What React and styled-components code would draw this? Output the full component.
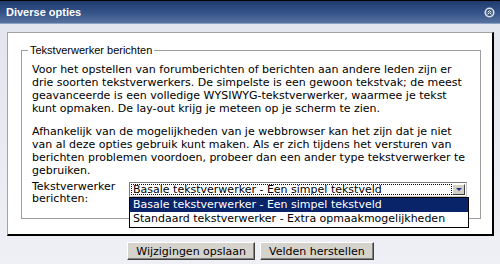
import React from 'react';
import styled, { createGlobalStyle } from 'styled-components';

const GlobalStyle = createGlobalStyle`
  html, body {
    margin: 0;
    padding: 0;
    background: #e4e7ef;
  }
`;

const Window = styled.div`
  width: 500px;
  height: 264px;
  box-sizing: border-box;
  border-top: 1px solid #000;
  background: linear-gradient(#e1e4ed, #eef0f5);
  display: flex;
  flex-direction: column;
  overflow: hidden;
  font-family: "DejaVu Sans", Verdana, sans-serif;
  font-size: 11px;
  color: #000;
`;

const TitleBar = styled.div`
  flex: none;
  height: 22px;
  display: flex;
  align-items: center;
  justify-content: space-between;
  padding: 0 5px 0 6px;
  background: linear-gradient(#1f3b6e, #365489 55%, #56729f);
  border-bottom: 1px solid #8ea2c6;
`;

const Title = styled.h1`
  margin: 0;
  font: bold 11px "Liberation Sans", Arial, sans-serif;
  color: #fff;
`;

const Body = styled.div`
  padding: 8px 6px 0 7px;
`;

const Panel = styled.div`
  background: #fff;
  border-top: 1px solid #a3a3a3;
  border-left: 1px solid #a3a3a3;
  border-right: 2px solid #000;
  border-bottom: 2px solid #000;
  padding: 11px 11px 15px 13px;
`;

const Group = styled.fieldset`
  margin: 0;
  min-inline-size: 0;
  padding: 6px 13px 13px 10px;
  border: 1px solid #9d9d9d;
`;

const Legend = styled.legend`
  margin-left: -4px;
  padding: 0 2px;
  font: 11px/13px "Liberation Sans", Arial, sans-serif;
  color: #000;
`;

const Para = styled.p`
  margin: 0 0 ${p => p.$gap}px;
  line-height: 13px;
  white-space: nowrap;
`;

const Row = styled.div`
  display: flex;
  align-items: flex-start;
`;

const Label = styled.label`
  width: 97px;
  flex: none;
  line-height: 12px;
`;

const Select = styled.div`
  position: relative;
  width: 338px;
  height: 15px;
  margin-top: 1px;
  box-sizing: border-box;
  display: flex;
  padding: 1px;
  background: #fff;
  border: 1px solid #7a7a7a;
  border-right-color: #c9c9c9;
  border-bottom-color: #c9c9c9;
`;

const Value = styled.div`
  flex: 1;
  border: 1px dotted #000;
  padding-left: 1px;
  line-height: 9px;
  white-space: nowrap;
  overflow: hidden;
`;

const ArrowButton = styled.div`
  width: 13px;
  box-sizing: border-box;
  display: flex;
  align-items: center;
  justify-content: center;
  background: #d4d0c8;
  border: 1px solid;
  border-color: #fff #404040 #404040 #fff;

  &::after {
    content: "";
    border-left: 3px solid transparent;
    border-right: 3px solid transparent;
    border-top: 3px solid #1a2c86;
  }
`;

const List = styled.ul`
  position: absolute;
  top: calc(100% + 1px);
  left: -1px;
  width: 340px;
  box-sizing: border-box;
  margin: 0;
  padding: 0 0 1px;
  list-style: none;
  background: #fff;
  border: 1px solid #000;
  z-index: 2;
`;

const Option = styled.li`
  height: 14px;
  line-height: 14px;
  padding-left: 3px;
  white-space: nowrap;
  background: ${p => (p.$active ? '#0a246a' : '#fff')};
  color: ${p => (p.$active ? '#fff' : '#000')};
`;

const Buttons = styled.div`
  display: flex;
  justify-content: center;
  gap: 5px;
  margin-top: 6px;
`;

const Button = styled.button`
  height: 18px;
  padding: 0 8px;
  font: 11px/13px "DejaVu Sans", Verdana, sans-serif;
  color: #000;
  background: #d6d3cc;
  border: 1px solid;
  border-color: #fff #404040 #404040 #fff;
  box-shadow: inset -1px -1px 0 #808080;
`;

function CollapseIcon() {
  return (
    <svg width="11" height="11" viewBox="0 0 11 11">
      <circle cx="5.5" cy="5.5" r="5" fill="#dde2ea" />
      <circle cx="5.5" cy="5.5" r="3.4" fill="#3d5683" />
      <path d="M3.6 5.4 L5.5 3.6 L7.4 5.4 M3.6 7.4 L5.5 5.6 L7.4 7.4" stroke="#fff" strokeWidth="1" fill="none" />
    </svg>
  );
}

export default function App() {
  return (
    <>
      <GlobalStyle />
      <Window>
        <TitleBar>
          <Title>Diverse opties</Title>
          <CollapseIcon />
        </TitleBar>
        <Body>
          <Panel>
            <Group>
              <Legend>Tekstverwerker berichten</Legend>
              <Para $gap={10}>
                Voor het opstellen van forumberichten of berichten aan andere leden zijn er<br />
                drie soorten tekstverwerkers. De simpelste is een gewoon tekstvak; de meest<br />
                geavanceerde is een volledige WYSIWYG-tekstverwerker, waarmee je tekst<br />
                kunt opmaken. De lay-out krijg je meteen op je scherm te zien.
              </Para>
              <Para $gap={4}>
                Afhankelijk van de mogelijkheden van je webbrowser kan het zijn dat je niet<br />
                van al deze opties gebruik kunt maken. Als er zich tijdens het versturen van<br />
                berichten problemen voordoen, probeer dan een ander type tekstverwerker te<br />
                gebruiken.
              </Para>
              <Row>
                <Label>Tekstverwerker berichten:</Label>
                <Select>
                  <Value>Basale tekstverwerker - Een simpel tekstveld</Value>
                  <ArrowButton />
                  <List>
                    <Option $active>Basale tekstverwerker - Een simpel tekstveld</Option>
                    <Option>Standaard tekstverwerker - Extra opmaakmogelijkheden</Option>
                  </List>
                </Select>
              </Row>
            </Group>
          </Panel>
          <Buttons>
            <Button>Wijzigingen opslaan</Button>
            <Button>Velden herstellen</Button>
          </Buttons>
        </Body>
      </Window>
    </>
  );
}
